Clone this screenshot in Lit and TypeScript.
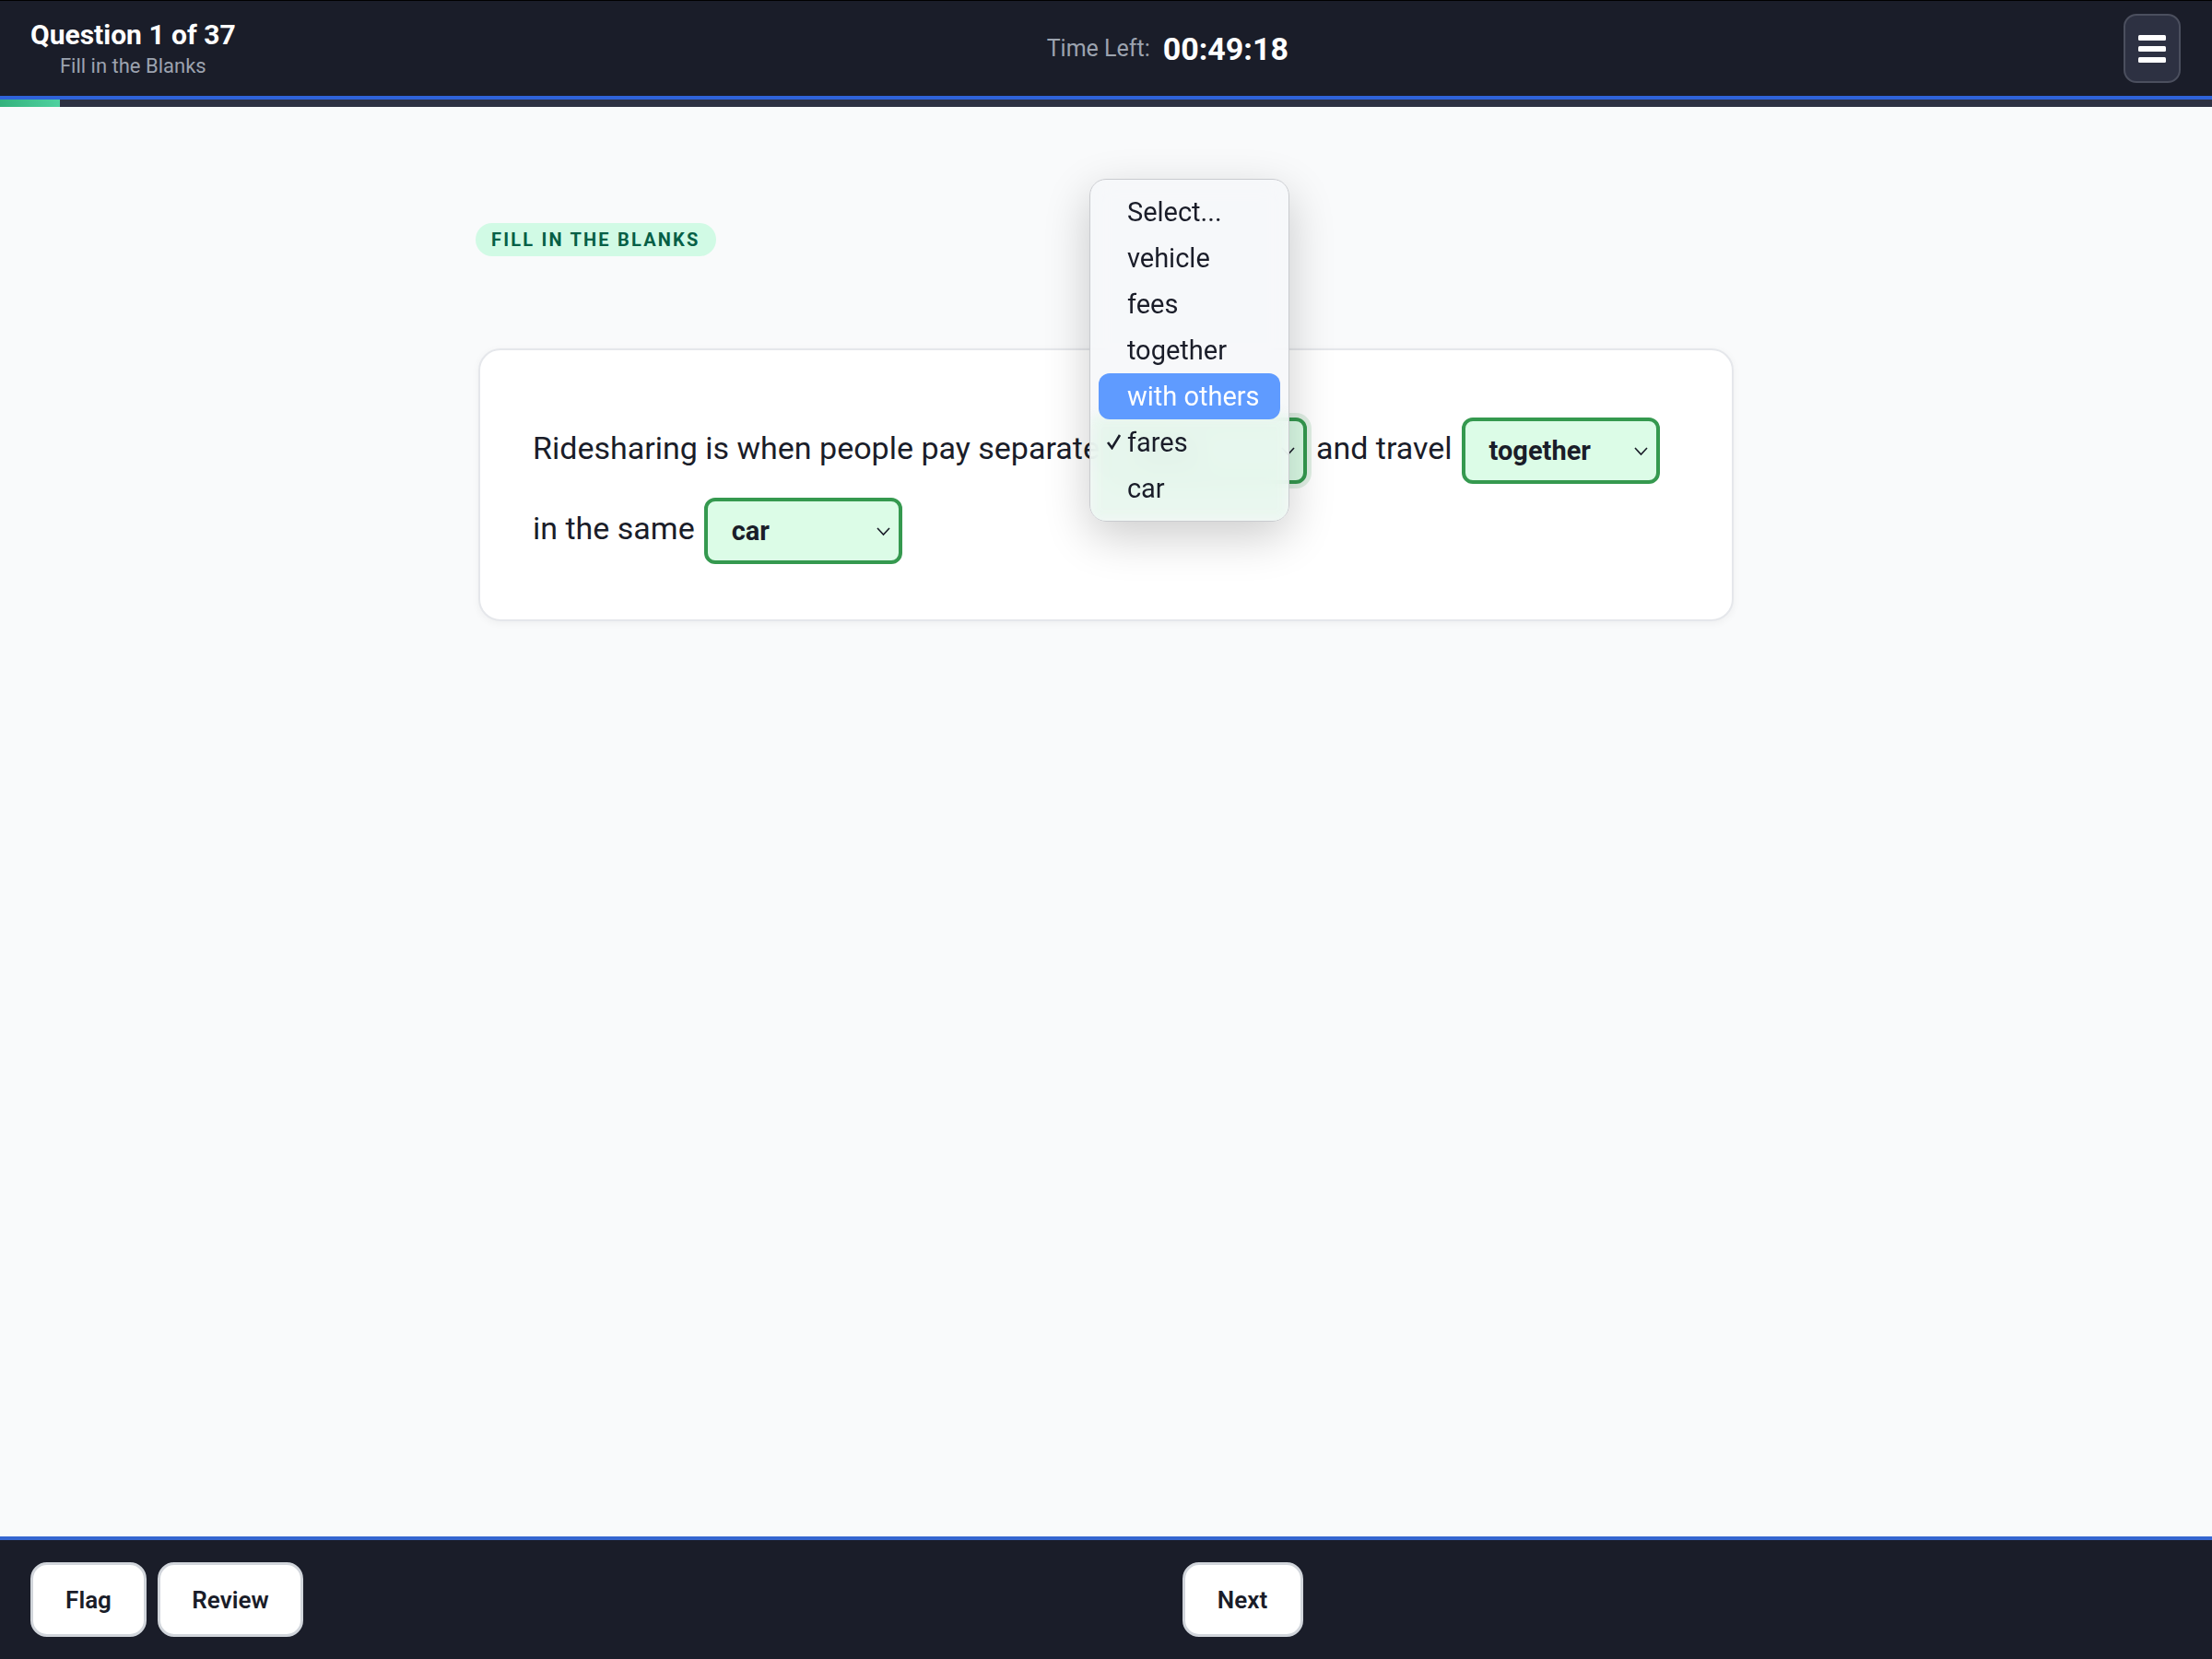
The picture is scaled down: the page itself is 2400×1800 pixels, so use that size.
import { LitElement, html, css } from "lit";
import { customElement } from "lit/decorators.js";

const OPTIONS = ["Select...", "vehicle", "fees", "together", "with others", "fares", "car"];

@customElement("app-root")
export class AppRoot extends LitElement {
  static styles = css`
    :host { display: block; height: 100vh; font-family: Roboto, "Liberation Sans", sans-serif; color: #1a1d29; }
    * { box-sizing: border-box; }
    .page { height: 100%; display: flex; flex-direction: column; background: #f9fafb; overflow: hidden; }

    .header { height: 108px; flex: none; background: #1a1d29; border-top: 1px solid #000; border-bottom: 4px solid #2f63d9;
      display: flex; align-items: center; justify-content: space-between; padding: 0 34px 0 33px; }
    .title { display: flex; flex-direction: column; align-items: center; gap: 3px; }
    .title b { font-size: 30px; line-height: 36px; font-weight: 700; color: #fff; }
    .title span { font-size: 22px; line-height: 26px; color: #9ca3af; }
    .timer { display: flex; align-items: center; gap: 14px; padding-right: 26px; }
    .timer span { font-size: 25px; color: #9ca3af; }
    .timer b { font-size: 34px; font-weight: 700; color: #fff; }
    .menu-btn { width: 62px; height: 75px; background: #2d3142; border: 2px solid #4b4f5e; border-radius: 14px;
      display: flex; flex-direction: column; align-items: center; justify-content: center; gap: 6px; padding: 0; }
    .menu-btn i { width: 30px; height: 6px; background: #fff; border-radius: 1.5px; }

    .progress { height: 8px; flex: none; background: #2d3142; }
    .progress div { height: 100%; background: linear-gradient(90deg, #34b27d, #4fd1a0); }

    .main { flex: 1; width: 1368px; margin: 0 auto; padding-top: 126px; }
    .pill { display: inline-flex; align-items: center; height: 36px; padding: 0 17px; border-radius: 18px; background: #d1fae5;
      color: #065f46; font-size: 20px; font-weight: 700; letter-spacing: 2.2px; }
    .card { margin: 100px 3px 0; height: 296px; background: #fff; border: 2px solid #e5e7eb; border-radius: 24px;
      box-shadow: 0 2px 8px rgba(0, 0, 0, 0.05); padding: 63px 57px 0; font-size: 34px; line-height: 87px; color: #1a1d29; }
    .sel { display: inline-flex; position: relative; align-items: center; justify-content: space-between; width: 215px; height: 72px; margin: 0 10px 0 10px;
      vertical-align: middle; padding: 0 9px 0 26px; background: #dcfce7; border: 4px solid #35994f; border-radius: 12px;
      font-size: 29px; line-height: 36px; font-weight: 700; color: #1a1d29; }
    .sel.focus { box-shadow: 0 0 0 5px rgba(53, 153, 79, 0.15); }
    .sel svg { width: 15px; height: 11px; flex: none; }

    .popup { position: absolute; left: -25px; top: -263px; width: 217px; padding: 10px 9px; border-radius: 18px; z-index: 5;
      background: rgba(246, 247, 249, 0.86); backdrop-filter: blur(14px); border: 1px solid #c9cbcf;
      box-shadow: 0 16px 50px rgba(0, 0, 0, 0.2); font-size: 29px; font-weight: 400; overflow: hidden; }
    .tint { position: absolute; inset: 256px 0 0; background: #dff6e7; opacity: 0.55; filter: blur(6px); }
    .opt { position: relative; height: 50px; display: flex; align-items: center; padding-left: 31px; border-radius: 12px; line-height: 36px; color: #1a1d29; }
    .opt.hi { background: #5f9bff; color: #fff; }
    .opt svg { position: absolute; left: 8px; top: 15px; width: 17px; height: 18px; }

    .footer { height: 133px; flex: none; background: #1a1d29; border-top: 4px solid #3566d0; padding: 24px 33px 0;
      display: flex; justify-content: space-between; align-items: flex-start; }
    .group { display: flex; gap: 12px; }
    .btn { height: 81px; padding: 0; display: flex; align-items: center; justify-content: center; background: #fff; border: 3px solid #d1d5db;
      border-radius: 18px; font: 600 26px Roboto, "Liberation Sans", sans-serif; color: #1a1d29; }
    .w126 { width: 126px; } .w158 { width: 158px; } .w131 { width: 131px; }
  `;

  private chevron() {
    return html`<svg viewBox="0 0 15 11"><path d="M1 2l6.5 7L14 2" fill="none" stroke="#1a1d29" stroke-width="1.6"/></svg>`;
  }

  private select(value: string, open = false) {
    return html`<span class="sel ${open ? "focus" : ""}">${value}${this.chevron()}${open ? this.popup() : ""}</span>`;
  }

  private popup() {
    return html`<span class="popup"><span class="tint"></span>${OPTIONS.map(
      (o) => html`<div class="opt ${o === "with others" ? "hi" : ""}">${o === "fares"
        ? html`<svg viewBox="0 0 17 18"><path d="M2 10l4.5 6L15 2" fill="none" stroke="#1a1d29" stroke-width="2.6"/></svg>`
        : ""}${o}</div>`
    )}</span>`;
  }

  render() {
    return html`<div class="page">
      <div class="header">
        <div class="title"><b>Question 1 of 37</b><span>Fill in the Blanks</span></div>
        <div class="timer"><span>Time Left:</span><b>00:49:18</b></div>
        <button class="menu-btn"><i></i><i></i><i></i></button>
      </div>
      <div class="progress"><div style="width:65px"></div></div>
      <div class="main">
        <span class="pill">FILL IN THE BLANKS</span>
        <div class="card">Ridesharing is when people pay separate${this.select("fares", true)}and travel${this.select("together")}<br />in the same${this.select("car")}</div>
      </div>
      <div class="footer">
        <div class="group"><button class="btn w126">Flag</button><button class="btn w158">Review</button></div>
        <button class="btn w131">Next</button>
        <div></div>
      </div>
    </div>`;
  }
}
